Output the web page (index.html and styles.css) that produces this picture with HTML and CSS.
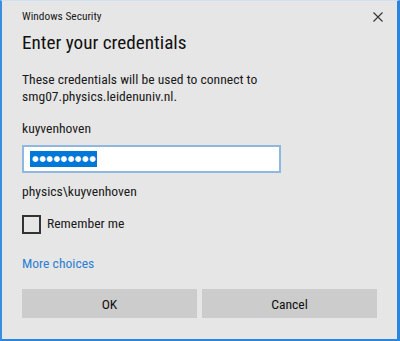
FILE: index.html
```html
<!DOCTYPE html>
<html>
<head>
<meta charset="utf-8">
<link rel="stylesheet" href="styles.css">
</head>
<body>
<div class="window">
  <div class="titlebar">
    <span class="title">Windows Security</span>
    <svg class="close" width="10" height="10" viewBox="0 0 10 10"><path d="M0.5 0.5L9.5 9.5M9.5 0.5L0.5 9.5" stroke="#333" stroke-width="1.1" fill="none"/></svg>
  </div>
  <h1 class="heading">Enter your credentials</h1>
  <p class="desc">These credentials will be used to connect to<br>smg07.physics.leidenuniv.nl.</p>
  <div class="label">kuyvenhoven</div>
  <div class="input"><span class="sel">●●●●●●●●●</span></div>
  <div class="label domain">physics\kuyvenhoven</div>
  <label class="check-row"><span class="checkbox"></span><span class="check-text">Remember me</span></label>
  <div class="more">More choices</div>
  <div class="buttons">
    <div class="btn">OK</div>
    <div class="btn">Cancel</div>
  </div>
</div>
</body>
</html>
```

FILE: styles.css
```css
html, body {
  margin: 0;
  padding: 0;
}
body {
  width: 400px;
  height: 341px;
  overflow: hidden;
  font-family: "Liberation Sans Narrow", "Roboto Condensed", "DejaVu Sans Condensed", "Liberation Sans", sans-serif;
  color: #1a1a1a;
}
.window {
  box-sizing: border-box;
  width: 400px;
  height: 341px;
  background: #e6e6e6;
  border-left: 2px solid #3a8ee0;
  border-right: 3px solid #2a86dc;
  border-bottom: 2px solid #2a86dc;
  border-top: 1px solid #cfe1f3;
  padding: 0 20px;
}
.titlebar {
  display: flex;
  justify-content: space-between;
  align-items: center;
  padding-top: 7px;
  height: 16px;
}
.title {
  font-size: 11.4px;
  line-height: 16px;
  color: #1a1a1a;
}
.close {
  margin-right: -6px;
  margin-top: 1px;
}
.heading {
  margin: 6px 0 0;
  font-weight: normal;
  font-size: 19.2px;
  line-height: 26px;
  color: #111;
}
.desc {
  margin: 15px 0 0;
  font-size: 13.6px;
  line-height: 17px;
}
.label {
  margin-top: 15px;
  font-size: 13.6px;
  line-height: 17px;
}
.input {
  box-sizing: border-box;
  margin-top: 8px;
  width: 259px;
  height: 28px;
  background: #fff;
  border: 2px solid #8fb8e0;
  display: flex;
  align-items: center;
  padding-left: 6px;
}
.sel {
  display: inline-block;
  height: 16px;
  padding: 0 1px 0 2px;
  background: #0078d7;
  color: #fff;
  font-family: "DejaVu Sans", sans-serif;
  font-size: 7.5px;
  line-height: 16px;
  letter-spacing: 0.6px;
  white-space: nowrap;
}
.domain {
  margin-top: 10px;
}
.check-row {
  display: flex;
  align-items: flex-start;
  margin-top: 15px;
}
.checkbox {
  box-sizing: border-box;
  width: 19px;
  height: 19px;
  border: 2px solid #333;
}
.check-text {
  margin-left: 6px;
  margin-top: 0;
  font-size: 13.6px;
  line-height: 17px;
}
.more {
  margin-top: 21px;
  font-size: 13.6px;
  line-height: 17px;
  color: #2b80d2;
}
.buttons {
  display: grid;
  grid-template-columns: 1fr 1fr;
  gap: 5px;
  margin-top: 17px;
}
.btn {
  height: 29px;
  background: #cccccc;
  display: flex;
  align-items: center;
  justify-content: center;
  font-size: 13.6px;
  color: #111;
}
```
